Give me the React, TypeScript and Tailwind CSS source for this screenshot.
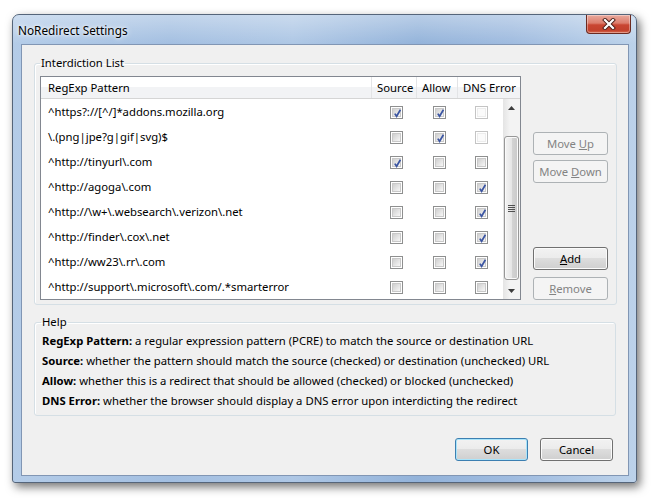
import type { ReactNode } from 'react';

type Row = { pattern: string; source: boolean; allow: boolean; dns: boolean };

const rows: Row[] = [
  { pattern: '^https?://[^/]*addons.mozilla.org', source: true, allow: true, dns: false },
  { pattern: '\\.(png|jpe?g|gif|svg)$', source: false, allow: true, dns: false },
  { pattern: '^http://tinyurl\\.com', source: true, allow: false, dns: false },
  { pattern: '^http://agoga\\.com', source: false, allow: false, dns: true },
  { pattern: '^http://\\w+\\.websearch\\.verizon\\.net', source: false, allow: false, dns: true },
  { pattern: '^http://finder\\.cox\\.net', source: false, allow: false, dns: true },
  { pattern: '^http://ww23\\.rr\\.com', source: false, allow: false, dns: true },
  { pattern: '^http://support\\.microsoft\\.com/.*smarterror', source: false, allow: false, dns: false },
];

function Checkbox({ checked, disabled }: { checked: boolean; disabled?: boolean }) {
  return (
    <span
      className={`relative flex h-[13px] w-[13px] shrink-0 items-center justify-center border bg-white ${
        disabled ? 'border-[#c4c4c4]' : 'border-[#8e8f8f]'
      }`}
    >
      <span
        className={`h-[9px] w-[9px] border ${
          disabled
            ? 'border-[#ececec] bg-[#fafafa]'
            : 'border-[#c9c9c9] bg-[linear-gradient(135deg,#cfcfcf,#f7f7f7)]'
        }`}
      />
      {checked && (
        <svg className="absolute left-[1px] top-[1px]" width="11" height="11" viewBox="0 0 11 11">
          <path d="M2.8 5.6 L4.6 8.3 L8.4 1.8" fill="none" stroke="#3b55a2" strokeWidth="1.7" />
        </svg>
      )}
    </span>
  );
}

function Btn({
  children,
  disabled,
  primary,
  className = '',
}: {
  children: ReactNode;
  disabled?: boolean;
  primary?: boolean;
  className?: string;
}) {
  const look = disabled
    ? 'border-[#adb2b5] bg-[#f4f4f4] text-[#838383]'
    : primary
    ? 'border-[#3c7fb1] bg-[linear-gradient(#f2f2f2_0%,#ebebeb_50%,#dddddd_50%,#cfcfcf_100%)] shadow-[inset_0_0_0_1px_#a9e4fa] text-black'
    : 'border-[#707070] bg-[linear-gradient(#f2f2f2_0%,#ebebeb_50%,#dddddd_50%,#cfcfcf_100%)] shadow-[inset_0_0_0_1px_#fbfbfb] text-black';
  return (
    <div className={`flex h-[23px] items-center justify-center rounded-[3px] border ${look} ${className}`}>
      <span>{children}</span>
    </div>
  );
}

function Arrow({ up }: { up?: boolean }) {
  return (
    <svg width="7" height="4" viewBox="0 0 7 4">
      <path d={up ? 'M0 4 L3.5 0 L7 4 Z' : 'M0 0 L3.5 4 L7 0 Z'} fill="#3c3c3c" />
    </svg>
  );
}

function Scrollbar() {
  return (
    <div className="flex w-[17px] flex-col bg-[linear-gradient(90deg,#e4e4e4,#f3f3f3_40%,#f3f3f3)]">
      <div className="flex h-[17px] items-center justify-center">
        <Arrow up />
      </div>
      <div className="h-[20px]" />
      <div className="mx-[1px] flex flex-1 items-center justify-center rounded-[3px] border border-[#979797] bg-[linear-gradient(90deg,#f4f4f4,#e6e6e6_50%,#d4d4d4_51%,#c9c9c9)] shadow-[inset_0_0_0_1px_#fafafa]">
        <div className="flex flex-col gap-[1px]">
          <span className="h-[1px] w-[7px] bg-[#505050]" />
          <span className="h-[1px] w-[7px] bg-[#505050]" />
          <span className="h-[1px] w-[7px] bg-[#505050]" />
          <span className="h-[1px] w-[7px] bg-[#505050]" />
        </div>
      </div>
      <div className="h-[2px]" />
      <div className="flex h-[17px] items-center justify-center">
        <Arrow />
      </div>
    </div>
  );
}

function Tree() {
  return (
    <div className="flex h-[224px] w-[481px] flex-col border border-[#828790] bg-white">
      <div className="flex h-[22px] border-b border-[#d5d5d5] bg-[linear-gradient(#ffffff_0%,#ffffff_50%,#f2f3f5_50%,#f2f3f5_100%)]">
        <div className="flex w-[331px] items-center border-r border-[#e3e4e6] pl-[7px]">RegExp Pattern</div>
        <div className="flex w-[45px] items-center border-r border-[#e3e4e6] pl-[5px]">Source</div>
        <div className="flex w-[41px] items-center border-r border-[#e3e4e6] pl-[5px]">Allow</div>
        <div className="flex flex-1 items-center pl-[5px]">DNS Error</div>
      </div>
      <div className="flex flex-1">
        <div className="flex w-[462px] flex-col">
          {rows.map((r, i) => (
            <div key={i} className="flex h-[25px] items-center pt-[1px]">
              <div className="w-[349px] pl-[7px]">{r.pattern}</div>
              <Checkbox checked={r.source} />
              <div className="w-[30px]" />
              <Checkbox checked={r.allow} />
              <div className="w-[29px]" />
              <Checkbox checked={r.dns} disabled={r.allow} />
            </div>
          ))}
        </div>
        <Scrollbar />
      </div>
    </div>
  );
}

function CloseButton() {
  return (
    <div className="flex h-[19px] w-[45px] items-center justify-center rounded-b-[4px] border border-t-0 border-[#6b2a20] bg-[linear-gradient(#e9a99d_0%,#dc7d6c_45%,#c94632_55%,#c2412c_85%,#d86a4f_100%)] shadow-[inset_0_0_0_1px_rgba(255,255,255,0.35)]">
      <svg width="14" height="12" viewBox="0 0 14 12">
        <path d="M3 2 L11 10 M11 2 L3 10" stroke="#4a1f19" strokeWidth="4" strokeLinecap="square" />
        <path d="M3 2 L11 10 M11 2 L3 10" stroke="#ffffff" strokeWidth="2.2" strokeLinecap="square" />
      </svg>
    </div>
  );
}

export default function App() {
  return (
    <div className="h-[502px] w-[656px] overflow-hidden bg-white pl-[12px] pt-[14px] font-['Noto_Sans',sans-serif] text-[11.3px] leading-[16px] text-black">
      <div className="flex h-[469px] w-[625px] flex-col rounded-t-[7px] rounded-b-[3px] border border-[#55657a] bg-[linear-gradient(90deg,#b4cce8_0%,#a3bfe1_25%,#aec7e5_45%,#93b3da_65%,#9fbbdf_80%,#bcd2ea_100%)] shadow-[3px_4px_10px_rgba(0,0,0,0.55)]">
        <div className="flex h-[29px] items-start justify-between rounded-t-[6px] bg-[linear-gradient(rgba(255,255,255,0.35),rgba(255,255,255,0))] pl-[5px] pr-[5px]">
          <span className="mt-[7px] text-[11.8px] [text-shadow:0_0_6px_#ffffff,0_0_3px_#ffffff]">NoRedirect Settings</span>
          <CloseButton />
        </div>
        <div className="mx-[8px] flex h-[432px] w-[608px] flex-col border border-[#8196b4] bg-[#f0f0f0]">
          <fieldset className="mx-[12px] mt-[10px] rounded-[3px] border border-[#d5dfe5] pb-[4px] pl-[5px] pr-[8px] pt-[5px] shadow-[inset_1px_1px_0_#ffffff]">
            <legend className="px-[1px] leading-[16px]">Interdiction List</legend>
            <div className="flex gap-[12px]">
              <Tree />
              <div className="flex w-[75px] flex-col pt-[56px]">
                <Btn disabled>
                  Move <u>U</u>p
                </Btn>
                <Btn disabled className="mt-[5px]">
                  Move <u>D</u>own
                </Btn>
                <div className="flex-1" />
                <Btn>
                  <u>A</u>dd
                </Btn>
                <Btn disabled className="mt-[7px]">
                  <u>R</u>emove
                </Btn>
              </div>
            </div>
          </fieldset>
          <fieldset className="mx-[12px] mt-[9px] rounded-[3px] border border-[#d5dfe5] pb-[4px] pl-[7px] pt-[1px] shadow-[inset_1px_1px_0_#ffffff]">
            <legend className="ml-[-1px] px-[1px] leading-[16px]">Help</legend>
            <div className="flex flex-col leading-[20px]">
              <div>
                <b>RegExp Pattern:</b> a regular expression pattern (PCRE) to match the source or destination URL
              </div>
              <div>
                <b>Source:</b> whether the pattern should match the source (checked) or destination (unchecked) URL
              </div>
              <div>
                <b>Allow:</b> whether this is a redirect that should be allowed (checked) or blocked (unchecked)
              </div>
              <div>
                <b>DNS Error:</b> whether the browser should display a DNS error upon interdicting the redirect
              </div>
            </div>
          </fieldset>
          <div className="mt-[22px] flex justify-end gap-[12px] pr-[15px]">
            <Btn primary className="w-[73px]">
              OK
            </Btn>
            <Btn className="w-[73px]">Cancel</Btn>
          </div>
        </div>
      </div>
    </div>
  );
}
